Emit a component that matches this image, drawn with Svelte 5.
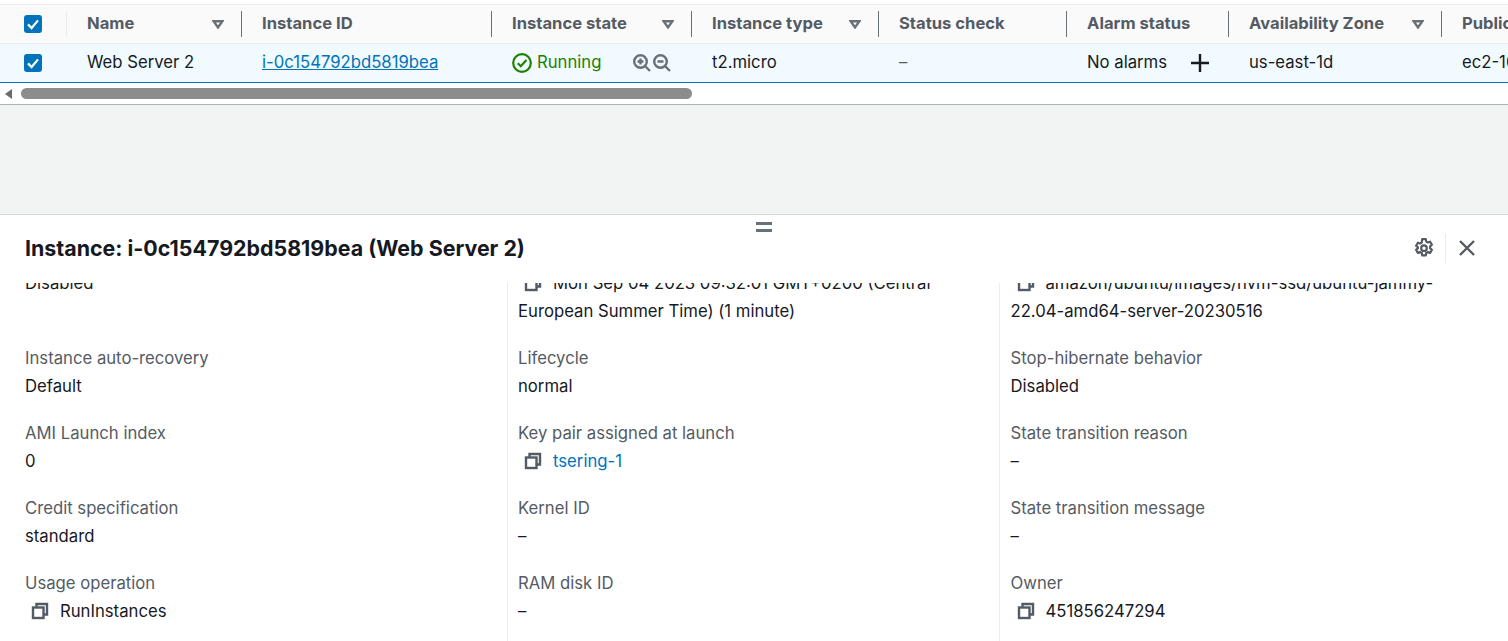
<script>
  const cols = [
    { name: 'Name', sort: true },
    { name: 'Instance ID' },
    { name: 'Instance state', sort: true },
    { name: 'Instance type', sort: true },
    { name: 'Status check' },
    { name: 'Alarm status' },
    { name: 'Availability Zone', sort: true },
    { name: 'Public IPv4 DNS', last: true }
  ];
  const details = [
    [
      { l: 'Monitoring', v: 'Disabled' },
      { l: 'Launch time', v: 'Mon Sep 04 2023 09:32:01 GMT+0200 (Central European Summer Time) (1 minute)', copy: true },
      { l: 'AMI name', v: 'amazon/ubuntu/images/hvm-ssd/ubuntu-jammy-22.04-amd64-server-20230516', copy: true }
    ],
    [
      { l: 'Instance auto-recovery', v: 'Default' },
      { l: 'Lifecycle', v: 'normal' },
      { l: 'Stop-hibernate behavior', v: 'Disabled' }
    ],
    [
      { l: 'AMI Launch index', v: '0' },
      { l: 'Key pair assigned at launch', v: 'tsering-1', copy: true, link: true },
      { l: 'State transition reason', v: '–' }
    ],
    [
      { l: 'Credit specification', v: 'standard' },
      { l: 'Kernel ID', v: '–' },
      { l: 'State transition message', v: '–' }
    ],
    [
      { l: 'Usage operation', v: 'RunInstances', copy: true },
      { l: 'RAM disk ID', v: '–' },
      { l: 'Owner', v: '451856247294', copy: true }
    ]
  ];
</script>

{#snippet check()}
  <svg class="check" viewBox="0 0 18 18" width="18" height="18" aria-hidden="true">
    <rect width="18" height="18" rx="3" fill="#0073bb" />
    <path d="M4 9.4 7.6 13 14 5.4" fill="none" stroke="#fff" stroke-width="2.2" />
  </svg>
{/snippet}

{#snippet copyIcon()}
  <svg class="copy" viewBox="0 0 18 18" width="18" height="18" aria-hidden="true">
    <path d="M5.5 5V2h10.5v10.5h-3.2" fill="none" stroke="#545b64" stroke-width="2.4" />
    <rect x="2" y="5.5" width="10.5" height="10.5" fill="none" stroke="#545b64" stroke-width="2.4" />
  </svg>
{/snippet}

<div class="page">
  <div class="table">
    <div class="row head">
      <div class="cell box light">{@render check()}</div>
      {#each cols as c}
        <div class="cell" class:last={c.last}>
          <span>{c.name}</span>
          {#if c.sort}
            <svg class="sort" viewBox="0 0 12 9" width="12" height="9" aria-hidden="true">
              <path d="M1.6 1.2h8.8L6 7.4z" fill="none" stroke="#687078" stroke-width="2.4" />
            </svg>
          {/if}
        </div>
      {/each}
    </div>
    <div class="row selected">
      <div class="cell box">{@render check()}</div>
      <div class="cell">Web Server 2</div>
      <div class="cell"><a href="#top">i-0c154792bd5819bea</a></div>
      <div class="cell state">
        <svg viewBox="0 0 20 20" width="20" height="20" aria-hidden="true">
          <circle cx="10" cy="10" r="8.8" fill="none" stroke="#1d8102" stroke-width="2.2" />
          <path d="M5.8 10.2 8.8 13.2 14.4 7" fill="none" stroke="#1d8102" stroke-width="2.2" />
        </svg>
        <span class="running">Running</span>
        <span class="zooms">
          <svg viewBox="0 0 18 18" width="18" height="18" aria-hidden="true">
            <circle cx="7.5" cy="7.5" r="6.3" fill="none" stroke="#687078" stroke-width="2.4" />
            <path d="M12 12l5 5M4.5 7.5h6M7.5 4.5v6" fill="none" stroke="#687078" stroke-width="2.4" />
          </svg>
          <svg viewBox="0 0 18 18" width="18" height="18" aria-hidden="true">
            <circle cx="7.5" cy="7.5" r="6.3" fill="none" stroke="#687078" stroke-width="2.4" />
            <path d="M12 12l5 5M4.5 7.5h6" fill="none" stroke="#687078" stroke-width="2.4" />
          </svg>
        </span>
      </div>
      <div class="cell">t2.micro</div>
      <div class="cell dash">–</div>
      <div class="cell alarm">
        <span>No alarms</span>
        <svg viewBox="0 0 18 18" width="18" height="18" aria-hidden="true">
          <path d="M0 9h18M9 0v18" fill="none" stroke="#16191f" stroke-width="2.4" />
        </svg>
      </div>
      <div class="cell">us-east-1d</div>
      <div class="cell last">ec2-100-25-12-44.compute-1.amazonaws.com</div>
    </div>
    <div class="scrollbar">
      <svg viewBox="0 0 9 10" width="9" height="10" aria-hidden="true"><path d="M8 0v10L1 5z" fill="#6b6b6b" /></svg>
      <div class="thumb"></div>
    </div>
  </div>

  <div class="gap"></div>

  <section class="panel">
    <div class="handle"><i></i><i></i></div>
    <header class="title">
      <h2>Instance: i-0c154792bd5819bea (Web Server 2)</h2>
      <div class="tools">
        <svg viewBox="0 0 20 20" width="20" height="20" aria-hidden="true">
          <path d="M8.2 1.2h3.6l.5 2.4 1.5.9 2.3-.8 1.8 3.1-1.8 1.6v1.8l1.8 1.6-1.8 3.1-2.3-.8-1.5.9-.5 2.4H8.2l-.5-2.4-1.5-.9-2.3.8-1.8-3.1 1.8-1.6V9.4L2.1 7.8l1.8-3.1 2.3.8 1.5-.9z" fill="none" stroke="#545b64" stroke-width="2.2" stroke-linejoin="round" />
          <circle cx="10" cy="10.2" r="2.8" fill="none" stroke="#545b64" stroke-width="2.2" />
        </svg>
        <span class="vr"></span>
        <svg viewBox="0 0 16 16" width="16" height="16" aria-hidden="true">
          <path d="M1 1l14 14M15 1 1 15" fill="none" stroke="#545b64" stroke-width="2.4" />
        </svg>
      </div>
    </header>
    <div class="scroll">
      <div class="grid">
        {#each details as row}
          {#each row as d}
            <div class="item">
              <div class="label">{d.l}</div>
              <div class="value" class:link={d.link}>
                {#if d.copy}{@render copyIcon()}{/if}{d.v}
              </div>
            </div>
          {/each}
        {/each}
      </div>
    </div>
  </section>
</div>

<style>
  :global(body) {
    margin: 0;
    background: #fff;
  }
  .page {
    height: 641px;
    overflow: hidden;
    display: flex;
    flex-direction: column;
    font-family: Inter, "Noto Sans", sans-serif;
    font-size: 16.7px;
    color: #16191f;
  }
  .table {
    padding-top: 4px;
    border-bottom: 1px solid #aab7b8;
    flex: none;
  }
  .row {
    display: grid;
    grid-template-columns: 67px 175px 250px 200px 187px 188px 162px 213px 1fr;
    overflow: hidden;
  }
  .head {
    height: 40px;
    background: #fafafa;
    border-top: 1px solid #eaeded;
    border-bottom: 1px solid #eaeded;
    box-sizing: border-box;
    font-weight: 700;
    font-size: 16.6px;
    color: #545b64;
  }
  .selected {
    height: 39px;
    background: #f1faff;
    border-bottom: 1px solid #0073bb;
    box-sizing: border-box;
  }
  .cell {
    display: flex;
    align-items: center;
    padding-left: 20px;
    padding-bottom: 2px;
    white-space: nowrap;
    position: relative;
    min-width: 0;
  }
  .cell svg,
  .zooms {
    margin-top: 2px;
  }
  .zooms svg {
    margin-top: 0;
  }
  .head .cell {
    justify-content: space-between;
    padding-right: 18px;
  }
  .head .cell::after {
    content: "";
    position: absolute;
    right: 0;
    top: 6px;
    bottom: 6px;
    width: 1px;
    background: #687078;
  }
  .head .cell.light::after {
    background: #eaeded;
  }
  .head .cell.last::after {
    display: none;
  }
  .cell.box {
    padding-left: 24px;
  }
  .head .cell.box {
    justify-content: flex-start;
    padding-right: 0;
  }
  .check {
    flex: none;
  }
  a {
    color: #0073bb;
    text-decoration: underline;
  }
  .state svg {
    flex: none;
  }
  .state {
    padding-right: 21px;
  }
  .running {
    color: #1d8102;
    margin-left: 5px;
  }
  .zooms {
    display: flex;
    gap: 2px;
    margin-left: auto;
  }
  .dash {
    color: #545b64;
  }
  .alarm {
    justify-content: space-between;
    padding-right: 20px;
  }
  .scrollbar {
    height: 21px;
    display: flex;
    align-items: center;
    padding-left: 4px;
    gap: 8px;
    background: #fff;
  }
  .thumb {
    width: 671px;
    height: 11px;
    border-radius: 6px;
    background: #8c8c8c;
  }
  .gap {
    height: 109px;
    flex: none;
    background: #f2f3f3;
    border-bottom: 1px solid #d5dbdb;
  }
  .panel {
    flex: 1;
    min-height: 0;
    display: flex;
    flex-direction: column;
    position: relative;
  }
  .handle {
    position: absolute;
    left: 756px;
    top: 7px;
    width: 16px;
    display: flex;
    flex-direction: column;
    gap: 4px;
  }
  .handle i {
    display: block;
    height: 3px;
    background: #687078;
  }
  .title {
    height: 68px;
    flex: none;
    display: flex;
    justify-content: space-between;
    align-items: center;
    padding: 0 33px 2px 25px;
    box-sizing: border-box;
  }
  h2 {
    margin: 0;
    font-size: 21.4px;
    font-weight: 700;
    line-height: 28px;
  }
  .tools {
    display: flex;
    align-items: center;
    gap: 11px;
  }
  .vr {
    width: 1px;
    height: 29px;
    background: #eaeded;
    margin-right: 2px;
  }
  .scroll {
    flex: 1;
    min-height: 0;
    overflow: hidden;
  }
  .grid {
    margin-top: -42px;
    display: grid;
    grid-template-columns: 507px 492px 1fr;
  }
  .item {
    padding: 0 60px 19px 25px;
    line-height: 28px;
    box-sizing: border-box;
  }
  .item:nth-child(3n + 2),
  .item:nth-child(3n) {
    border-left: 1px solid #eaeded;
    padding-left: 10px;
  }
  .item:nth-child(3n) {
    padding-left: 10.5px;
    padding-right: 50px;
  }
  .label {
    color: #545b64;
  }
  .value.link {
    color: #0073bb;
  }
  .copy {
    vertical-align: -3px;
    margin: 0 11px 0 6px;
  }
</style>
